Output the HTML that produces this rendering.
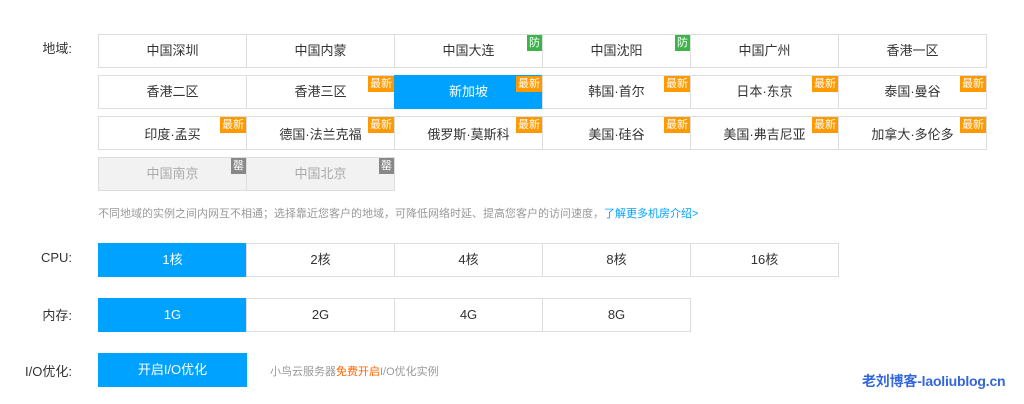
<!DOCTYPE html><html><head><meta charset="utf-8"><style>
body{margin:0;width:1024px;height:404px;background:#fff;font-family:"Liberation Sans","Noto Sans CJK SC",sans-serif;position:relative;overflow:hidden}
.l{position:absolute;width:72px;text-align:right;font-size:13px;color:#333;left:0}
.c{position:absolute;width:147px;height:32px;border:1px solid #ddd;background:#fff;text-align:center;line-height:32px;font-size:13px;color:#333;box-sizing:content-box}
.s{background:#00a2ff;color:#fff;border-color:#00a2ff}
.d{background:#f2f2f2;color:#aaa}
.b{position:absolute;right:0;top:0;height:16px;padding:0 2px;font-size:11px;line-height:16px;color:#fff;background:#f90}
.g{background:#3bb54a}.k{background:#888}
</style></head><body>
<div class="l" style="top:38px">地域:</div>
<div class="c" style="left:98px;top:34px">中国深圳</div>
<div class="c" style="left:246px;top:34px">中国内蒙</div>
<div class="c" style="left:394px;top:34px">中国大连<span class="b g">防</span></div>
<div class="c" style="left:542px;top:34px">中国沈阳<span class="b g">防</span></div>
<div class="c" style="left:690px;top:34px">中国广州</div>
<div class="c" style="left:838px;top:34px">香港一区</div>
<div class="c" style="left:98px;top:75px">香港二区</div>
<div class="c" style="left:246px;top:75px">香港三区<span class="b">最新</span></div>
<div class="c s" style="left:394px;top:75px">新加坡<span class="b">最新</span></div>
<div class="c" style="left:542px;top:75px">韩国·首尔<span class="b">最新</span></div>
<div class="c" style="left:690px;top:75px">日本·东京<span class="b">最新</span></div>
<div class="c" style="left:838px;top:75px">泰国·曼谷<span class="b">最新</span></div>
<div class="c" style="left:98px;top:116px;line-height:35px">印度·孟买<span class="b">最新</span></div>
<div class="c" style="left:246px;top:116px;line-height:35px">德国·法兰克福<span class="b">最新</span></div>
<div class="c" style="left:394px;top:116px;line-height:35px">俄罗斯·莫斯科<span class="b">最新</span></div>
<div class="c" style="left:542px;top:116px;line-height:35px">美国·硅谷<span class="b">最新</span></div>
<div class="c" style="left:690px;top:116px;line-height:35px">美国·弗吉尼亚<span class="b">最新</span></div>
<div class="c" style="left:838px;top:116px;line-height:35px">加拿大·多伦多<span class="b">最新</span></div>
<div class="c d" style="left:98px;top:157px">中国南京<span class="b k">罄</span></div>
<div class="c d" style="left:246px;top:157px">中国北京<span class="b k">罄</span></div>
<div style="position:absolute;left:98px;top:205px;font-size:11px;color:#999">不同地域的实例之间内网互不相通；选择靠近您客户的地域，可降低网络时延、提高您客户的访问速度，<span style="color:#00a2ff">了解更多机房介绍&gt;</span></div>
<div class="l" style="top:250px">CPU:</div>
<div class="c s" style="left:98px;top:243px">1核</div>
<div class="c" style="left:246px;top:243px">2核</div>
<div class="c" style="left:394px;top:243px">4核</div>
<div class="c" style="left:542px;top:243px">8核</div>
<div class="c" style="left:690px;top:243px">16核</div>
<div class="l" style="top:305px">内存:</div>
<div class="c s" style="left:98px;top:298px">1G</div>
<div class="c" style="left:246px;top:298px">2G</div>
<div class="c" style="left:394px;top:298px">4G</div>
<div class="c" style="left:542px;top:298px">8G</div>
<div class="l" style="top:361px">I/O优化:</div>
<div class="c s" style="left:98px;top:353px">开启I/O优化</div>
<div style="position:absolute;left:270px;top:363px;font-size:11px;color:#999">小鸟云服务器<span style="color:#f60">免费开启</span>I/O优化实例</div>
<div style="position:absolute;left:862px;top:371px;font-size:14px;font-weight:bold;color:#3366dd;letter-spacing:-0.2px">老刘博客-laoliublog.cn</div>
</body></html>
